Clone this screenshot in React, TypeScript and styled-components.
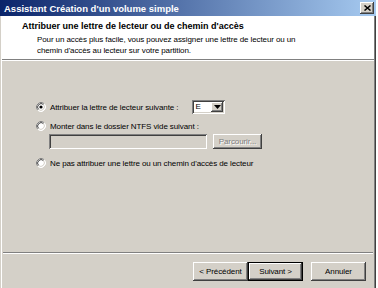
import React from 'react';
import styled, {createGlobalStyle, css} from "styled-components";

const GlobalStyle = createGlobalStyle`
    html, body {
        margin: 0;
        padding: 0;
        background: #ffffff;
    }
    body {
        font-family: "Liberation Sans", Arial, sans-serif;
        font-size: 8px;
        letter-spacing: -0.1px;
        color: #000;
    }
`

const raised = css`
    box-shadow: inset -1px -1px #404040, inset 1px 1px #ffffff, inset -2px -2px #808080, inset 2px 2px #d4d0c8;
`

const sunken = css`
    box-shadow: inset 1px 1px #808080, inset -1px -1px #ffffff, inset 2px 2px #404040, inset -2px -2px #d4d0c8;
`

type RadioProps = {
    checked?: boolean
}

const Radio = ({checked}: RadioProps) => (
    <RadioIcon width="10" height="10" viewBox="0 0 10 10">
        <circle cx="5" cy="5" r="4.5" fill="#fff"/>
        <path d="M1.82 8.18 A4.5 4.5 0 0 1 8.18 1.82" stroke="#808080" fill="none"/>
        <path d="M8.18 1.82 A4.5 4.5 0 0 1 1.82 8.18" stroke="#ffffff" fill="none"/>
        <path d="M2.53 7.47 A3.5 3.5 0 0 1 7.47 2.53" stroke="#404040" fill="none"/>
        <path d="M7.47 2.53 A3.5 3.5 0 0 1 2.53 7.47" stroke="#d4d0c8" fill="none"/>
        {checked && <circle cx="5" cy="5" r="1.6" fill="#000"/>}
    </RadioIcon>
)

export default function App() {
    return (
        <>
            <GlobalStyle/>
            <Window>
                <TitleBar>
                    <TitleText>Assistant Création d'un volume simple</TitleText>
                    <CloseButton>
                        <svg width="7" height="6" viewBox="0 0 7 6">
                            <path d="M0.5 0.5 L6.5 5.5 M6.5 0.5 L0.5 5.5" stroke="#000" strokeWidth="1.5"/>
                        </svg>
                    </CloseButton>
                </TitleBar>
                <Frame>
                    <Header>
                        <HeaderTitle>Attribuer une lettre de lecteur ou de chemin d'accès</HeaderTitle>
                        <HeaderText>
                            Pour un accès plus facile, vous pouvez assigner une lettre de lecteur ou un<br/>
                            chemin d'accès au lecteur sur votre partition.
                        </HeaderText>
                    </Header>
                    <Body>
                        <Row $top={0}>
                            <Radio checked/>
                            <Label>Attribuer la lettre de lecteur suivante :</Label>
                            <Combo>
                                <ComboValue>E</ComboValue>
                                <ComboArrow>
                                    <svg width="7" height="4" viewBox="0 0 7 4">
                                        <path d="M0 0 H7 L3.5 4 Z" fill="#000"/>
                                    </svg>
                                </ComboArrow>
                            </Combo>
                        </Row>
                        <Row $top={5}>
                            <Radio/>
                            <Label>Monter dans le dossier NTFS vide suivant :</Label>
                        </Row>
                        <PathRow>
                            <PathInput/>
                            <BrowseButton>Parcourir...</BrowseButton>
                        </PathRow>
                        <Row $top={7}>
                            <Radio/>
                            <Label>Ne pas attribuer une lettre ou un chemin d'accès de lecteur</Label>
                        </Row>
                    </Body>
                    <Footer>
                        <Button>&lt; Précédent</Button>
                        <Button $default>Suivant &gt;</Button>
                        <Button $gap={8}>Annuler</Button>
                    </Footer>
                </Frame>
            </Window>
        </>
    );
}

const Window = styled.div`
    width: 376px;
    height: 288px;
    display: flex;
    flex-direction: column;
    background: #d4d0c8;
    overflow: hidden;
`

const TitleBar = styled.div`
    height: 16px;
    flex-shrink: 0;
    display: flex;
    align-items: center;
    justify-content: space-between;
    padding: 0 2px 0 4px;
    background: linear-gradient(90deg, #0a246a 0%, #a6caf0 100%);
`

const TitleText = styled.span`
    color: #ffffff;
    font-weight: bold;
    font-size: 9.5px;
    letter-spacing: 0;
    white-space: nowrap;
`

const CloseButton = styled.div`
    width: 14px;
    height: 12px;
    display: flex;
    align-items: center;
    justify-content: center;
    background: #d4d0c8;
    ${raised};
`

const Frame = styled.div`
    flex: 1;
    display: flex;
    flex-direction: column;
    border-left: 1px solid #d4d0c8;
    border-right: 1px solid #404040;
    box-shadow: inset 1px 0 #ffffff, inset -1px 0 #808080;
    padding: 0 2px;
`

const Header = styled.div`
    height: 44px;
    box-sizing: border-box;
    background: #ffffff;
    padding: 5px 0 0 20px;
    border-bottom: 1px solid #808080;
    box-shadow: 0 1px #ffffff;
    margin: 0 -1px;
`

const HeaderTitle = styled.div`
    font-weight: bold;
    font-size: 9px;
    letter-spacing: 0;
    line-height: 10px;
    white-space: nowrap;
`

const HeaderText = styled.div`
    margin-top: 3px;
    padding-left: 15px;
    line-height: 11px;
    white-space: nowrap;
`

const Body = styled.div`
    flex: 1;
    display: flex;
    flex-direction: column;
    padding: 40px 0 0 33px;
`

const Row = styled.div<{ $top: number }>`
    display: flex;
    align-items: center;
    height: 14px;
    margin-top: ${props => props.$top}px;
`

const RadioIcon = styled.svg`
    flex-shrink: 0;
`

const Label = styled.span`
    margin-left: 4px;
    white-space: nowrap;
`

const Combo = styled.div`
    margin-left: 14px;
    width: 33px;
    height: 14px;
    display: flex;
    background: #ffffff;
    padding: 2px;
    box-sizing: border-box;
    ${sunken};
`

const ComboValue = styled.span`
    flex: 1;
    line-height: 10px;
    padding-left: 1px;
`

const ComboArrow = styled.div`
    width: 12px;
    display: flex;
    align-items: center;
    justify-content: center;
    background: #d4d0c8;
    ${raised};
`

const PathRow = styled.div`
    display: flex;
    margin: 1px 0 0 13px;
    gap: 6px;
`

const PathInput = styled.div`
    width: 158px;
    height: 15px;
    background: #d4d0c8;
    ${sunken};
`

const BrowseButton = styled.div`
    width: 49px;
    height: 15px;
    display: flex;
    align-items: center;
    justify-content: center;
    color: #808080;
    text-shadow: 1px 1px #ffffff;
    ${raised};
`

const Footer = styled.div`
    height: 36px;
    flex-shrink: 0;
    box-sizing: border-box;
    display: flex;
    justify-content: flex-end;
    align-items: flex-start;
    padding: 9px 7px 0 0;
    border-top: 1px solid #808080;
    box-shadow: inset 0 1px #ffffff;
`

const Button = styled.div<{ $default?: boolean, $gap?: number }>`
    width: 55px;
    height: 19px;
    box-sizing: border-box;
    display: flex;
    align-items: center;
    justify-content: center;
    margin-left: ${props => props.$gap || 0}px;
    ${raised};
    ${props => props.$default && css`
        border: 1px solid #000;
        box-shadow: inset -1px -1px #404040, inset 1px 1px #ffffff, inset -2px -2px #808080;
    `};
`
